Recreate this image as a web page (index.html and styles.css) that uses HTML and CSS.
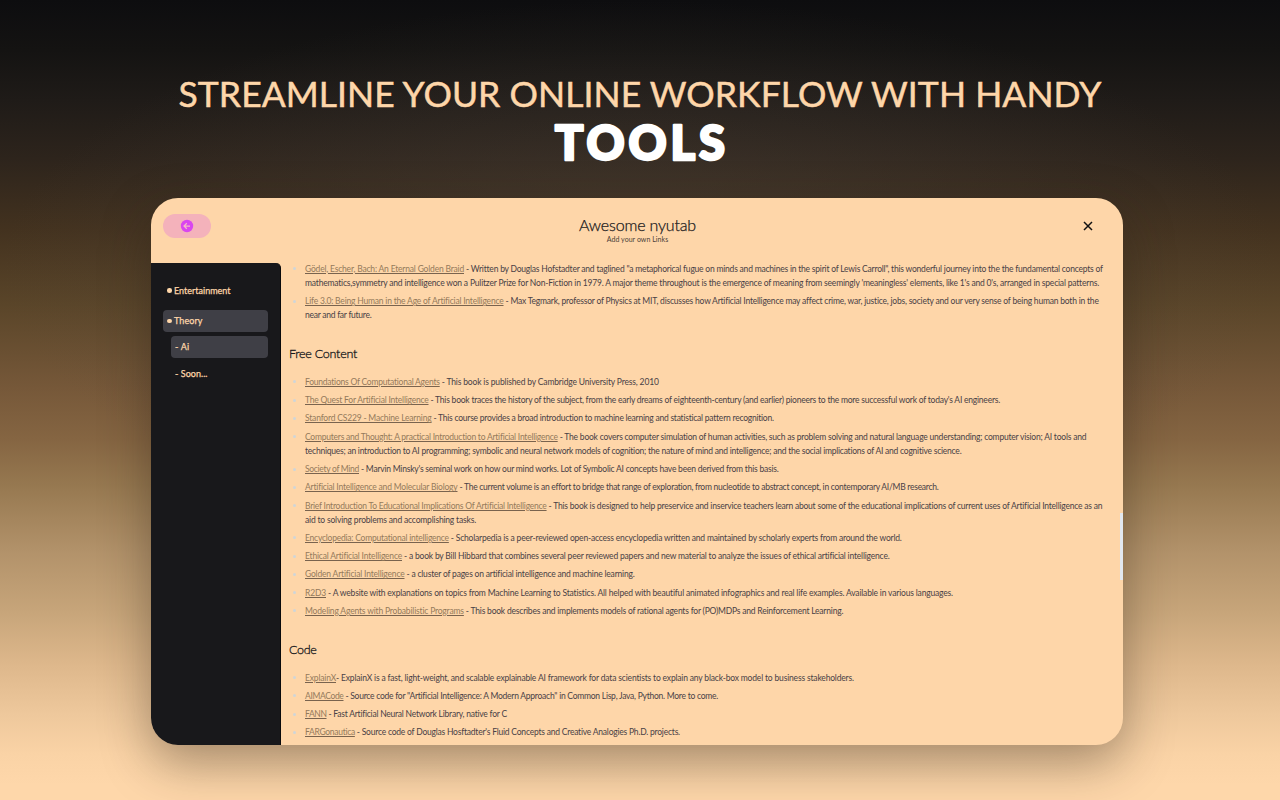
FILE: index.html
```html
<!DOCTYPE html>
<html lang="en">
<head>
<meta charset="utf-8">
<title>Awesome nyutab</title>
<link rel="stylesheet" href="styles.css">
</head>
<body>
<header class="hero">
<h1 class="hero-line"><span data-w="923">STREAMLINE YOUR ONLINE WORKFLOW WITH HANDY</span></h1>
<svg class="hero-strong" width="200" height="72" viewBox="0 0 200 72"><text x="100" y="52" text-anchor="middle" textLength="170">TOOLS</text></svg>
</header>
<section class="card">
<div class="topbar">
<button class="back" aria-label="Back"><svg width="14" height="14" viewBox="0 0 14 14"><circle cx="7" cy="7" r="6.2" fill="#d946ef"/><path d="M10 7H4.2M6.8 4.2 4 7l2.8 2.8" fill="none" stroke="#f8b8c6" stroke-width="1.25"/></svg></button>
<div class="titles"><h2 class="title"><span data-w="117">Awesome nyutab</span></h2><p class="subtitle"><span data-w="61.5">Add your own Links</span></p></div>
<svg class="close" width="10" height="10" viewBox="0 0 10 10"><path d="M1 1l8 8M9 1L1 9" stroke="#111" stroke-width="1.5"/></svg>
</div>
<div class="body">
<nav class="side">
<div class="item"><i class="dot"></i><span data-w="56.5">Entertainment</span></div>
<div class="item active"><i class="dot"></i><span data-w="28.5">Theory</span></div>
<div class="item sub active"><span data-w="14.5">- Ai</span></div>
<div class="item sub"><span data-w="32.5">- Soon...</span></div>
</nav>
<main class="content">
<ul class="list">
<li><p><a data-w="159">Gödel, Escher, Bach: An Eternal Golden Braid</a><span data-w="638.5"> - Written by Douglas Hofstadter and taglined "a metaphorical fugue on minds and machines in the spirit of Lewis Carroll", this wonderful journey into the the fundamental concepts of</span></p><p><span data-w="794">mathematics,symmetry and intelligence won a Pulitzer Prize for Non-Fiction in 1979. A major theme throughout is the emergence of meaning from seemingly 'meaningless' elements, like 1's and 0's, arranged in special patterns.</span></p></li>
<li><p><a data-w="198.5">Life 3.0: Being Human in the Age of Artificial Intelligence</a><span data-w="595"> - Max Tegmark, professor of Physics at MIT, discusses how Artificial Intelligence may affect crime, war, justice, jobs, society and our very sense of being human both in the</span></p><p><span data-w="66.5">near and far future.</span></p></li>
</ul>
<h3 class="section"><span data-w="68">Free Content</span></h3>
<ul class="list">
<li><p><a data-w="135">Foundations Of Computational Agents</a><span data-w="219"> - This book is published by Cambridge University Press, 2010</span></p></li>
<li><p><a data-w="123.5">The Quest For Artificial Intelligence</a><span data-w="571.5"> - This book traces the history of the subject, from the early dreams of eighteenth-century (and earlier) pioneers to the more successful work of today's AI engineers.</span></p></li>
<li><p><a data-w="126.5">Stanford CS229 - Machine Learning</a><span data-w="342.5"> - This course provides a broad introduction to machine learning and statistical pattern recognition.</span></p></li>
<li><p><a data-w="253">Computers and Thought: A practical Introduction to Artificial Intelligence</a><span data-w="529"> - The book covers computer simulation of human activities, such as problem solving and natural language understanding; computer vision; AI tools and</span></p><p><span data-w="657">techniques; an introduction to AI programming; symbolic and neural network models of cognition; the nature of mind and intelligence; and the social implications of AI and cognitive science.</span></p></li>
<li><p><a data-w="54">Society of Mind</a><span data-w="419.5"> - Marvin Minsky's seminal work on how our mind works. Lot of Symbolic AI concepts have been derived from this basis.</span></p></li>
<li><p><a data-w="152.5">Artificial Intelligence and Molecular Biology</a><span data-w="481"> - The current volume is an effort to bridge that range of exploration, from nucleotide to abstract concept, in contemporary AI/MB research.</span></p></li>
<li><p><a data-w="242">Brief Introduction To Educational Implications Of Artificial Intelligence</a><span data-w="556"> - This book is designed to help preservice and inservice teachers learn about some of the educational implications of current uses of Artificial Intelligence as an</span></p><p><span data-w="171">aid to solving problems and accomplishing tasks.</span></p></li>
<li><p><a data-w="144">Encyclopedia: Computational intelligence</a><span data-w="452.5"> - Scholarpedia is a peer-reviewed open-access encyclopedia written and maintained by scholarly experts from around the world.</span></p></li>
<li><p><a data-w="97">Ethical Artificial Intelligence</a><span data-w="487.5"> - a book by Bill Hibbard that combines several peer reviewed papers and new material to analyze the issues of ethical artificial intelligence.</span></p></li>
<li><p><a data-w="99.5">Golden Artificial Intelligence</a><span data-w="230"> - a cluster of pages on artificial intelligence and machine learning.</span></p></li>
<li><p><a data-w="21">R2D3</a><span data-w="627.5"> - A website with explanations on topics from Machine Learning to Statistics. All helped with beautiful animated infographics and real life examples. Available in various languages.</span></p></li>
<li><p><a data-w="159">Modeling Agents with Probabilistic Programs</a><span data-w="379.5"> - This book describes and implements models of rational agents for (PO)MDPs and Reinforcement Learning.</span></p></li>
</ul>
<h3 class="section"><span data-w="27.5">Code</span></h3>
<ul class="list">
<li><p><a data-w="31">ExplainX</a><span data-w="518">- ExplainX is a fast, light-weight, and scalable explainable AI framework for data scientists to explain any black-box model to business stakeholders.</span></p></li>
<li><p><a data-w="38.5">AIMACode</a><span data-w="374.5"> - Source code for "Artificial Intelligence: A Modern Approach" in Common Lisp, Java, Python. More to come.</span></p></li>
<li><p><a data-w="21.5">FANN</a><span data-w="180.5"> - Fast Artificial Neural Network Library, native for C</span></p></li>
<li><p><a data-w="50">FARGonautica</a><span data-w="325"> - Source code of Douglas Hosftadter's Fluid Concepts and Creative Analogies Ph.D. projects.</span></p></li>
</ul>
</main>
</div>
<i class="thumb"></i>
</section>
<script src="fit.js"></script>
</body>
</html>
```
FILE: styles.css
```css
* { box-sizing: border-box; margin: 0; padding: 0; }
body {
  width: 1280px; height: 800px; overflow: hidden;
  display: flex; flex-direction: column; align-items: center;
  font-family: Lato, "Open Sans", sans-serif;
  background:
    radial-gradient(ellipse 640px 270px at 50% 270px, rgba(88, 76, 66, .42), transparent),
    linear-gradient(180deg, #0d0d0f 0, #141312 50px, #1f1b18 100px, #2d241c 158px, #43321f 230px, #5a4529 305px, #765839 388px, #856542 439px, #967850 485px, #b2926a 551px, #c7a57a 612px, #ddb78b 663px, #eec89c 714px, #fad3a6 755px, #fed7aa 785px);
}
span, a { white-space: pre; }
.hero { height: 198px; padding-top: 72px; display: flex; flex-direction: column; align-items: center; }
.hero-line { font-size: 35.5px; line-height: 44px; font-weight: 400; color: #fed6a9; -webkit-text-stroke: .5px #fed6a9; }
.hero-strong { flex: none; margin-top: -8px; font-size: 47px; font-weight: 900; fill: #fff; stroke: #fff; stroke-width: 2.6px; stroke-linejoin: round; }
.card {
  position: relative; flex: none; width: 972px; height: 547px; margin-left: -6px;
  border-radius: 27px; overflow: hidden; background: #fed6a9;
  box-shadow: 0 18px 50px rgba(40, 30, 20, .4);
}
.topbar { height: 63px; display: flex; justify-content: space-between; padding: 16px 30px 0 12px; }
.back { width: 48px; height: 24px; border: 0; border-radius: 12px; background: #f4b2bb; display: flex; align-items: center; justify-content: center; }
.titles { text-align: center; margin-right: 19px; color: #18181b; }
.title { font-size: 16px; font-weight: 300; line-height: 21px; height: 22px; -webkit-text-stroke: .25px; }
.subtitle { font-size: 7px; line-height: 7px; color: #4a3f38; }
.close { margin-top: 7px; }
.body { display: flex; height: 484px; }
.side { width: 130px; margin-top: 2px; padding: 16px 12px; border-radius: 0 5px 0 0; background: #18181b; border-right: 1px solid #09090b; color: #fed6a9; }
.item { display: flex; align-items: center; height: 22.5px; margin-bottom: 8px; padding-left: 4px; border-radius: 4px; font-size: 9px; -webkit-text-stroke: .25px; }
.item.active { background: #3f3f46; margin-bottom: 3.7px; }
.item.sub { margin-left: 8px; }
.dot { width: 4.5px; height: 4.5px; margin-right: 2.5px; border-radius: 50%; background: #fed6a9; }
.content { flex: 1; padding: .6px 0 0 8px; color: #494146; }
.list { list-style: none; padding-left: 16px; }
.list li { position: relative; margin-bottom: 4.05px; font-size: 8.5px; line-height: 14.2px; }
.list li:last-child { margin-bottom: 0; }
.list li::before { content: ""; position: absolute; left: -12px; top: 5.5px; width: 3px; height: 3px; border-radius: 50%; background: #cfd5d8; }
.list p { display: flex; height: 14.2px; }
.list a { color: #947a5b; text-decoration: underline; text-decoration-color: #79634e; text-underline-offset: 1px; }
.section { margin: 22.65px 0 9.9px; font-size: 12.5px; font-weight: 300; line-height: 18.5px; height: 20px; color: #18181b; -webkit-text-stroke: .3px; }
.thumb { position: absolute; right: 0; top: 315px; width: 3px; height: 67px; background: #e2e8f0; }
```
FILE: fit.js
```js
// Spread each text run evenly over its measure.
document.querySelectorAll('[data-w]').forEach(function (el) {
  var r = document.createRange();
  r.selectNodeContents(el);
  var natural = r.getBoundingClientRect().width;
  el.style.letterSpacing = (el.dataset.w - natural) / el.textContent.length + 'px';
});
```
